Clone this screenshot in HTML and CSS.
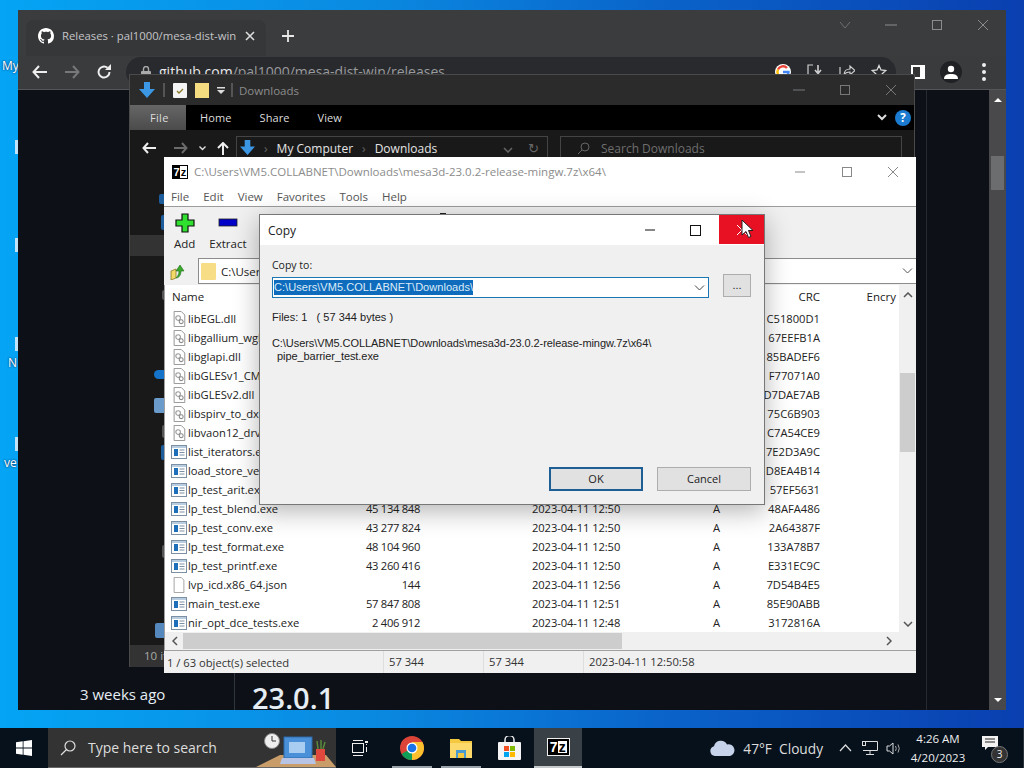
FILE: index.html
```html
<!DOCTYPE html>
<html lang="en">
<head>
  <meta charset="UTF-8">
  <title>Copy - 7-Zip</title>
  <link rel="stylesheet" href="styles.css">
</head>
<body>
  <svg class="defs" width="0" height="0">
    <symbol id="ico-dll" viewBox="0 0 16 18">
      <path d="M2.5.5h8l4 4v13h-12z" fill="#fff" stroke="#8a8a8a"/>
      <circle cx="7" cy="8" r="2.6" fill="none" stroke="#9a9a9a" stroke-width="1.2"/>
      <circle cx="10.5" cy="12" r="2.2" fill="none" stroke="#8a8a8a" stroke-width="1.2"/>
    </symbol>
    <symbol id="ico-exe" viewBox="0 0 16 14">
      <rect x=".5" y=".5" width="15" height="13" fill="#fff" stroke="#7d8fa3"/>
      <rect x="1" y="1" width="14" height="2" fill="#b9cde0"/>
      <rect x="3" y="4" width="4" height="7" fill="#1c6fb8"/>
      <path d="M8.5 5h5M8.5 7.5h5M8.5 10h5" stroke="#7d8fa3"/>
    </symbol>
    <symbol id="ico-file" viewBox="0 0 16 18">
      <path d="M2.5.5h8l3 3v14h-11z" fill="#fff" stroke="#9a9a9a"/>
    </symbol>
    <symbol id="ico-down" viewBox="0 0 16 16">
      <path d="M5 0h6v7h5l-8 9-8-9h5z" fill="#3b97e3"/>
    </symbol>
  </svg>

  <!-- bits of desktop icons that stick out left of the browser -->
  <span class="desk-label desk-my">My</span>
  <span class="desk-label desk-n">N</span>
  <span class="desk-label desk-ve">ve</span>
  <i class="desk-bit bit-1"></i>
  <i class="desk-bit bit-2"></i>
  <i class="desk-bit bit-3"></i>
  <i class="desk-bit bit-4"></i>

  <div class="chrome">
    <div class="tabstrip">
      <div class="tab">
        <svg width="16" height="16" viewBox="0 0 16 16"><path fill="#fff" d="M8 0C3.58 0 0 3.58 0 8c0 3.54 2.29 6.53 5.47 7.59.4.07.55-.17.55-.38 0-.19-.01-.82-.01-1.49-2.01.37-2.53-.49-2.69-.94-.09-.23-.48-.94-.82-1.13-.28-.15-.68-.52-.01-.53.63-.01 1.08.58 1.23.82.72 1.21 1.87.87 2.33.66.07-.52.28-.87.51-1.07-1.78-.2-3.64-.89-3.64-3.95 0-.87.31-1.59.82-2.15-.08-.2-.36-1.02.08-2.12 0 0 .67-.21 2.2.82.64-.18 1.32-.27 2-.27.68 0 1.36.09 2 .27 1.53-1.04 2.2-.82 2.2-.82.44 1.1.16 1.92.08 2.12.51.56.82 1.27.82 2.15 0 3.07-1.87 3.75-3.65 3.95.29.25.54.73.54 1.48 0 1.07-.01 1.93-.01 2.2 0 .21.15.46.55.38A8.013 8.013 0 0016 8c0-4.42-3.58-8-8-8z"/></svg>
        <span class="tab-title">Releases · pal1000/mesa-dist-win</span>
        <svg width="10" height="10" viewBox="0 0 10 10"><path d="M1 1l8 8M9 1l-8 8" stroke="#ddd" stroke-width="1.6"/></svg>
      </div>
      <svg class="newtab" width="14" height="14" viewBox="0 0 14 14"><path d="M7 1v12M1 7h12" stroke="#e8e8e8" stroke-width="1.8"/></svg>
      <div class="win-btns dim">
        <svg width="12" height="12" viewBox="0 0 12 12"><path d="M1 3l5 6 5-6" fill="none" stroke="#6f7072"/></svg>
        <svg width="12" height="12" viewBox="0 0 12 12"><path d="M0 6h12" stroke="#8b8c8e"/></svg>
        <svg width="12" height="12" viewBox="0 0 12 12"><rect x="1.5" y="1.5" width="9" height="9" fill="none" stroke="#8b8c8e"/></svg>
        <svg width="12" height="12" viewBox="0 0 12 12"><path d="M1 1l10 10M11 1L1 11" stroke="#8b8c8e"/></svg>
      </div>
    </div>
    <div class="toolbar">
      <svg width="16" height="14" viewBox="0 0 16 14"><path d="M7 1L1.500 7 7 13M2 7h13" fill="none" stroke="#eee" stroke-width="2"/></svg>
      <svg class="gap-nav" width="16" height="14" viewBox="0 0 16 14"><path d="M9 1l5.500 6L9 13M14 7H1" fill="none" stroke="#77787a" stroke-width="2"/></svg>
      <svg class="gap-nav" width="16" height="16" viewBox="0 0 16 16"><path d="M13.500 8A5.500 5.500 0 1 1 11.500 3.800" fill="none" stroke="#eee" stroke-width="2"/><path d="M9 6h6V0z" fill="#eee"/></svg>
      <div class="omnibox">
        <svg width="10" height="12" viewBox="0 0 10 12"><rect y="5" width="10" height="7" rx="1" fill="#aaa"/><path d="M2.500 5V3a2.500 2.500 0 0 1 5 0v2" fill="none" stroke="#aaa" stroke-width="1.400"/></svg>
        <span class="url"><b>github.com</b>/pal1000/mesa-dist-win/releases</span>
        <svg class="omni-first" width="16" height="16" viewBox="0 0 16 16">
          <circle cx="8" cy="8" r="8" fill="#fff"/>
          <path d="M3 5.500A5.500 5.500 0 0 1 12 4" fill="none" stroke="#ea4335" stroke-width="2.400"/>
          <path d="M3 5.500a5.500 5.500 0 0 0 0 5" fill="none" stroke="#fbbc05" stroke-width="2.400"/>
          <path d="M3 10.500A5.500 5.500 0 0 0 12 12" fill="none" stroke="#34a853" stroke-width="2.400"/>
          <path d="M8 8h5.500A5.500 5.500 0 0 1 12 12" fill="none" stroke="#4285f4" stroke-width="2.400"/>
        </svg>
        <svg class="omni-ico" width="16" height="16" viewBox="0 0 16 16"><path d="M6 1H1v14h14v-4" fill="none" stroke="#d0d0d0" stroke-width="1.200"/><path d="M11 1v7M8 6l3 3.500L14 6" fill="none" stroke="#d0d0d0" stroke-width="1.600"/></svg>
        <svg class="omni-ico" width="16" height="16" viewBox="0 0 16 16"><path d="M1 3v12h11" fill="none" stroke="#d0d0d0" stroke-width="1.200"/><path d="M5 11c0-4 3-6 6-6V2l5 4.500-5 4.500V8c-3 0-5 1-6 3z" fill="none" stroke="#d0d0d0" stroke-width="1.200"/></svg>
        <svg class="omni-ico" width="16" height="16" viewBox="0 0 16 16"><path d="M8 1.500l2 4.500 4.800.5-3.600 3.200 1 4.800L8 12.200 3.800 14.500l1-4.800L1.200 6.500 6 6z" fill="none" stroke="#d8d8d8" stroke-width="1.300"/></svg>
      </div>
      <svg class="panel" width="14" height="14" viewBox="0 0 14 14"><rect width="14" height="14" fill="#fff"/><rect x="2" y="2" width="7" height="10" fill="#333"/></svg>
      <span class="avatar"><svg width="14" height="14" viewBox="0 0 14 14"><circle cx="7" cy="4" r="3.200" fill="#fff"/><path d="M0 14c0-4 3-5 7-5s7 1 7 5z" fill="#fff"/></svg></span>
      <span class="dots"><i></i><i></i><i></i></span>
    </div>
    <div class="page">
      <div class="page-main">
        <i class="page-line"></i>
        <div class="page-foot">
          <span class="ago">3 weeks ago</span>
          <span class="rule"></span>
          <span class="version">23.0.1</span>
        </div>
      </div>
      <div class="page-scroll">
        <span class="tri-up"></span>
        <span class="page-thumb"></span>
        <span class="tri-down"></span>
      </div>
    </div>
  </div>

  <div class="explorer">
    <div class="ex-title">
      <svg width="16" height="16"><use href="#ico-down"/></svg>
      <span class="sep"></span>
      <svg width="14" height="15" viewBox="0 0 14 15"><rect width="14" height="15" rx="1" fill="#f4f4f4"/><path d="M4 8l2 2 4-4" fill="none" stroke="#8a7a2a" stroke-width="1.300"/></svg>
      <svg width="14" height="15" viewBox="0 0 14 15"><rect width="14" height="15" fill="#f6dc80"/></svg>
      <svg class="qa-more" width="8" height="7" viewBox="0 0 8 7"><path d="M0 0h8v1.400H0zM0 3h8L4 7z" fill="#ddd"/></svg>
      <span class="sep"></span>
      <span class="ex-name">Downloads</span>
      <div class="win-btns ex-btns">
        <svg width="12" height="12" viewBox="0 0 12 12"><path d="M0 6h12" stroke="#77787a"/></svg>
        <svg width="12" height="12" viewBox="0 0 12 12"><rect x="1.500" y="1.500" width="9" height="9" fill="none" stroke="#77787a"/></svg>
        <svg width="12" height="12" viewBox="0 0 12 12"><path d="M1 1l10 10M11 1L1 11" stroke="#77787a"/></svg>
      </div>
    </div>
    <div class="ex-ribbon">
      <span class="rb-tab rb-file">File</span>
      <span class="rb-tab">Home</span>
      <span class="rb-tab">Share</span>
      <span class="rb-tab">View</span>
      <svg class="rb-chev" width="10" height="7" viewBox="0 0 10 7"><path d="M1 1l4 4 4-4" fill="none" stroke="#ddd" stroke-width="2"/></svg>
      <span class="help">?</span>
    </div>
    <div class="ex-nav">
      <svg width="14" height="12" viewBox="0 0 14 12"><path d="M6 1L1.500 6 6 11M2 6h12" fill="none" stroke="#eee" stroke-width="2"/></svg>
      <svg class="nv-fwd" width="14" height="12" viewBox="0 0 14 12"><path d="M8 1l4.500 5L8 11M12 6H0" fill="none" stroke="#6b6b6b" stroke-width="2"/></svg>
      <svg class="nv-dd" width="7" height="5" viewBox="0 0 7 5"><path d="M.5.5l3 3 3-3" fill="none" stroke="#ddd" stroke-width="1.400"/></svg>
      <svg class="nv-up" width="12" height="13" viewBox="0 0 12 13"><path d="M1 6l5-5 5 5M6 1v12" fill="none" stroke="#eee" stroke-width="2"/></svg>
      <div class="ex-path">
        <svg width="15" height="15"><use href="#ico-down"/></svg>
        <span class="crumb-sep">›</span>
        <span>My Computer</span>
        <span class="crumb-sep">›</span>
        <span>Downloads</span>
        <svg class="path-chev" width="10" height="6" viewBox="0 0 10 6"><path d="M1 1l4 4 4-4" fill="none" stroke="#666" stroke-width="1.500"/></svg>
        <span class="path-refresh">↻</span>
      </div>
      <div class="ex-search">
        <svg width="13" height="13" viewBox="0 0 13 13"><circle cx="8" cy="5" r="4" fill="none" stroke="#666"/><path d="M5 8l-4 4" stroke="#666"/></svg>
        <span>Search Downloads</span>
      </div>
    </div>
    <div class="ex-body">
      <i class="side-selected"></i>
      <i class="side-bit s1"></i>
      <i class="side-bit s2"></i>
      <i class="side-bit s3"></i>
      <i class="side-bit s4"></i>
      <i class="side-bit s5"></i>
      <i class="side-bit s6"></i>
      <i class="side-bit g1"></i>
      <i class="side-bit g2"></i>
      <i class="side-bit g3"></i>
    </div>
    <div class="ex-status">10 items</div>
  </div>

  <div class="sevenzip">
    <div class="sz-title">
      <span class="logo7z"><b>7</b><em>z</em></span>
      <span class="sz-path">C:\Users\VM5.COLLABNET\Downloads\mesa3d-23.0.2-release-mingw.7z\x64\</span>
      <div class="win-btns sz-btns">
        <svg width="12" height="12" viewBox="0 0 12 12"><path d="M0 6h10" stroke="#888"/></svg>
        <svg width="12" height="12" viewBox="0 0 12 12"><rect x="1.500" y="1.500" width="9" height="9" fill="none" stroke="#888"/></svg>
        <svg width="12" height="12" viewBox="0 0 12 12"><path d="M1 1l10 10M11 1L1 11" stroke="#888"/></svg>
      </div>
    </div>
    <div class="sz-menu">
      <span>File</span><span>Edit</span><span>View</span><span>Favorites</span><span>Tools</span><span>Help</span>
    </div>
    <div class="sz-tools">
      <div class="tool">
        <svg width="20" height="20" viewBox="0 0 20 20"><path d="M7 1h6v6h6v6h-6v6H7v-6H1V7h6z" fill="#2fe02f" stroke="#111" stroke-width="1.200"/></svg>
        <span>Add</span>
      </div>
      <div class="tool">
        <svg width="20" height="20" viewBox="0 0 20 20"><rect x="1" y="6" width="18" height="7" fill="#0000c8" stroke="#222" stroke-width=".8"/></svg>
        <span>Extract</span>
      </div>
      <i class="tool-top"></i>
    </div>
    <div class="sz-addr">
      <svg width="16" height="17" viewBox="0 0 16 17"><path d="M1 8l5-2v9l-5 2z" fill="#f3d968" stroke="#8a7a2a" stroke-width=".8"/><path d="M6 15c3 0 5-3 5-7h3L10 2 6 8h3c0 3-1 5-3 7z" fill="#3aa82a" stroke="#1f6f18" stroke-width=".6"/></svg>
      <div class="addr-box">
        <svg width="15" height="17" viewBox="0 0 15 17"><rect width="15" height="17" rx="1" fill="#f7dd85"/></svg>
        <span>C:\Users\VM5.COLLABNET\Downloads\mesa3d-23.0.2-release-mingw.7z\x64\</span>
        <svg class="addr-chev" width="11" height="6" viewBox="0 0 11 6"><path d="M1 .5l4.500 4.500L10 .5" fill="none" stroke="#555"/></svg>
      </div>
    </div>
    <div class="sz-list">
      <div class="list-main">
        <div class="row head"><span class="c-name">Name</span><span class="c-crc">CRC</span><span class="c-enc">Encry</span></div>
        <div class="row"><svg class="ic"><use href="#ico-dll"/></svg><span class="c-name">libEGL.dll</span><span class="c-crc">C51800D1</span></div>
        <div class="row"><svg class="ic"><use href="#ico-dll"/></svg><span class="c-name">libgallium_wgl.dll</span><span class="c-crc">67EEFB1A</span></div>
        <div class="row"><svg class="ic"><use href="#ico-dll"/></svg><span class="c-name">libglapi.dll</span><span class="c-crc">85BADEF6</span></div>
        <div class="row"><svg class="ic"><use href="#ico-dll"/></svg><span class="c-name">libGLESv1_CM.dll</span><span class="c-crc">F77071A0</span></div>
        <div class="row"><svg class="ic"><use href="#ico-dll"/></svg><span class="c-name">libGLESv2.dll</span><span class="c-crc">D7DAE7AB</span></div>
        <div class="row"><svg class="ic"><use href="#ico-dll"/></svg><span class="c-name">libspirv_to_dxil.dll</span><span class="c-crc">75C6B903</span></div>
        <div class="row"><svg class="ic"><use href="#ico-dll"/></svg><span class="c-name">libvaon12_drv_video.dll</span><span class="c-crc">C7A54CE9</span></div>
        <div class="row"><svg class="ic"><use href="#ico-exe"/></svg><span class="c-name">list_iterators.exe</span><span class="c-crc">7E2D3A9C</span></div>
        <div class="row"><svg class="ic"><use href="#ico-exe"/></svg><span class="c-name">load_store_vec.exe</span><span class="c-crc">D8EA4B14</span></div>
        <div class="row"><svg class="ic"><use href="#ico-exe"/></svg><span class="c-name">lp_test_arit.exe</span><span class="c-crc">57EF5631</span></div>
        <div class="row"><svg class="ic"><use href="#ico-exe"/></svg><span class="c-name">lp_test_blend.exe</span><span class="c-size">45 134 848</span><span class="c-date">2023-04-11 12:50</span><span class="c-attr">A</span><span class="c-crc">48AFA486</span></div>
        <div class="row"><svg class="ic"><use href="#ico-exe"/></svg><span class="c-name">lp_test_conv.exe</span><span class="c-size">43 277 824</span><span class="c-date">2023-04-11 12:50</span><span class="c-attr">A</span><span class="c-crc">2A64387F</span></div>
        <div class="row"><svg class="ic"><use href="#ico-exe"/></svg><span class="c-name">lp_test_format.exe</span><span class="c-size">48 104 960</span><span class="c-date">2023-04-11 12:50</span><span class="c-attr">A</span><span class="c-crc">133A78B7</span></div>
        <div class="row"><svg class="ic"><use href="#ico-exe"/></svg><span class="c-name">lp_test_printf.exe</span><span class="c-size">43 260 416</span><span class="c-date">2023-04-11 12:50</span><span class="c-attr">A</span><span class="c-crc">E331EC9C</span></div>
        <div class="row"><svg class="ic"><use href="#ico-file"/></svg><span class="c-name">lvp_icd.x86_64.json</span><span class="c-size">144</span><span class="c-date">2023-04-11 12:56</span><span class="c-attr">A</span><span class="c-crc">7D54B4E5</span></div>
        <div class="row"><svg class="ic"><use href="#ico-exe"/></svg><span class="c-name">main_test.exe</span><span class="c-size">57 847 808</span><span class="c-date">2023-04-11 12:51</span><span class="c-attr">A</span><span class="c-crc">85E90ABB</span></div>
        <div class="row"><svg class="ic"><use href="#ico-exe"/></svg><span class="c-name">nir_opt_dce_tests.exe</span><span class="c-size">2 406 912</span><span class="c-date">2023-04-11 12:48</span><span class="c-attr">A</span><span class="c-crc">3172816A</span></div>
      </div>
      <div class="vscroll">
        <svg width="10" height="6" viewBox="0 0 10 6"><path d="M1 5l4-4 4 4" fill="none" stroke="#555" stroke-width="1.500"/></svg>
        <span class="vthumb"></span>
        <svg class="v-down" width="10" height="6" viewBox="0 0 10 6"><path d="M1 1l4 4 4-4" fill="none" stroke="#555" stroke-width="1.500"/></svg>
      </div>
    </div>
    <div class="hscroll">
      <svg width="6" height="10" viewBox="0 0 6 10"><path d="M5 1L1 5l4 4" fill="none" stroke="#555" stroke-width="1.500"/></svg>
      <span class="hthumb"></span>
      <svg class="h-right" width="6" height="10" viewBox="0 0 6 10"><path d="M1 1l4 4-4 4" fill="none" stroke="#555" stroke-width="1.500"/></svg>
    </div>
    <div class="sz-status">
      <span class="st-sel">1 / 63 object(s) selected</span>
      <span class="st-size">57 344</span>
      <span class="st-size">57 344</span>
      <span class="st-date">2023-04-11 12:50:58</span>
    </div>
  </div>

  <div class="dialog">
    <div class="dlg-title">
      <span class="dlg-name">Copy</span>
      <svg class="dlg-min" width="12" height="12" viewBox="0 0 12 12"><path d="M1 6h10" stroke="#111"/></svg>
      <svg class="dlg-max" width="11" height="11" viewBox="0 0 11 11"><rect x=".5" y=".5" width="10" height="10" fill="none" stroke="#111"/></svg>
      <span class="dlg-close"><svg width="12" height="12" viewBox="0 0 12 12"><path d="M1 1l10 10M11 1L1 11" stroke="#fff"/></svg></span>
    </div>
    <div class="dlg-body">
      <div class="dlg-label">Copy to:</div>
      <div class="dlg-combo-row">
        <div class="dlg-combo">
          <span class="dlg-sel">C:\Users\VM5.COLLABNET\Downloads\</span>
          <svg width="11" height="6" viewBox="0 0 11 6"><path d="M1 .5l4.500 4.500L10 .5" fill="none" stroke="#444"/></svg>
        </div>
        <span class="dlg-dots">...</span>
      </div>
      <div class="dlg-files">Files: 1 &nbsp; ( 57 344 bytes )</div>
      <div class="dlg-src">C:\Users\VM5.COLLABNET\Downloads\mesa3d-23.0.2-release-mingw.7z\x64\</div>
      <div class="dlg-src dlg-src2">pipe_barrier_test.exe</div>
      <div class="dlg-actions">
        <span class="btn btn-ok">OK</span>
        <span class="btn">Cancel</span>
      </div>
    </div>
  </div>

  <svg class="cursor" width="13" height="20" viewBox="0 0 13 20"><path d="M1 1v15l4-3.500 2.500 6 2.500-1-2.500-6H12z" fill="#fff" stroke="#222"/></svg>

  <div class="taskbar">
    <svg class="start" width="16" height="16" viewBox="0 0 16 16"><path d="M0 2.300l6.700-1v6.300H0zM7.500 1.200L16 0v7.600H7.500zM0 8.400h6.700v6.300l-6.700-1zM7.500 8.400H16V16l-8.500-1.200z" fill="#fff"/></svg>
    <div class="search">
      <svg width="16" height="16" viewBox="0 0 16 16"><circle cx="10" cy="6" r="5" fill="none" stroke="#ddd" stroke-width="1.200"/><path d="M6.500 9.500L1 15" stroke="#ddd" stroke-width="1.200"/></svg>
      <span>Type here to search</span>
      <svg class="search-art" width="80" height="36" viewBox="0 0 80 36">
        <path d="M12 30L24 24H70L80 36H0z" fill="#c99d6a"/>
        <circle cx="16" cy="10" r="7.500" fill="#eee" stroke="#888"/>
        <path d="M16 5v5h4" fill="none" stroke="#333"/>
        <rect x="28" y="6" width="28" height="21" fill="#4a90d9" stroke="#2d6aa8"/>
        <rect x="33" y="11" width="16" height="11" fill="#a9cdf0"/>
        <path d="M26 27h32l2 6H24z" fill="#b7c4e6"/>
        <rect x="60" y="18" width="9" height="12" fill="#e0483e"/>
        <path d="M62 18l-1-8M65 18v-9M67 18l2-7" stroke="#5a8a3a" stroke-width="1.500"/>
      </svg>
    </div>
    <svg class="taskview" width="16" height="16" viewBox="0 0 16 16"><path d="M1 .5h10M1 15.500h10M14.500 4v1M14.500 7v5" stroke="#eee"/><rect x=".5" y="3.500" width="11" height="9" fill="none" stroke="#eee"/><rect x="13" y="1" width="3" height="2" fill="#eee"/></svg>
    <span class="tb-app tb-on">
      <svg width="24" height="24" viewBox="0 0 24 24">
        <circle cx="12" cy="12" r="12" fill="#db4437"/>
        <path d="M12 12L1.600 18A12 12 0 0 0 12 24l6-12z" fill="#0f9d58"/>
        <path d="M12 24A12 12 0 0 0 24 12a12 12 0 0 0-1.600-6H12z" fill="#fbc02d"/>
        <circle cx="12" cy="12" r="5.500" fill="#fff"/>
        <circle cx="12" cy="12" r="4.300" fill="#1a73e8"/>
      </svg>
    </span>
    <span class="tb-app tb-on">
      <svg width="22" height="20" viewBox="0 0 22 20"><path d="M0 1h9l2 2h11v17H0z" fill="#f4c93f"/><rect y="5" width="22" height="15" fill="#fbd96b"/><rect x="6" y="12" width="10" height="8" fill="#4a9bd1"/><rect x="8" y="15" width="6" height="5" fill="#f4c93f"/></svg>
    </span>
    <span class="tb-app">
      <svg width="23" height="24" viewBox="0 0 23 24"><path d="M7 6V4a4 4 0 0 1 9 0v2" fill="none" stroke="#eee" stroke-width="1.500"/><rect y="6" width="23" height="18" rx="1" fill="#f5f5f5"/><rect x="6" y="10" width="5" height="5" fill="#f25022"/><rect x="12" y="10" width="5" height="5" fill="#7fba00"/><rect x="6" y="16" width="5" height="5" fill="#00a4ef"/><rect x="12" y="16" width="5" height="5" fill="#ffb900"/></svg>
    </span>
    <span class="tb-app tb-active"><span class="logo7z logo-big"><b>7</b><em>z</em></span></span>
    <div class="tray">
      <svg class="cloud" width="25" height="16" viewBox="0 0 25 16"><path d="M5 16a5 5 0 0 1-1-9.800A7 7 0 0 1 17 4.500 5.800 5.800 0 0 1 20 16z" fill="#c6d3ea"/></svg>
      <span class="weather">47°F&nbsp; Cloudy</span>
      <svg class="caret" width="13" height="8" viewBox="0 0 13 8"><path d="M1 7l5.500-6L12 7" fill="none" stroke="#ddd" stroke-width="1.200"/></svg>
      <svg class="net" width="16" height="14" viewBox="0 0 16 14"><path d="M3 .5h12.500v9H1" fill="none" stroke="#ddd"/><rect x=".5" y=".5" width="3" height="4" fill="none" stroke="#ddd"/><path d="M8 9.500v3.500M4 13.500h8" stroke="#ddd"/></svg>
      <svg class="vol" width="15" height="13" viewBox="0 0 15 13"><path d="M1 4h2.500L7 1v11L3.500 9H1z" fill="none" stroke="#ddd"/><path d="M9.500 4q1.500 2.500 0 5M12 2.500q2.500 4 0 8" fill="none" stroke="#aaa"/></svg>
      <div class="clock"><span>4:26 AM</span><span>4/20/2023</span></div>
      <span class="notify">
        <svg width="16" height="14" viewBox="0 0 16 14"><path d="M0 0h16v11H6l-3 3v-3H0z" fill="#f2f2f2"/><path d="M3 3h10M3 6h10" stroke="#222"/></svg>
        <span class="badge">3</span>
      </span>
    </div>
  </div>
</body>
</html>
```

FILE: styles.css
```css
* {
  box-sizing: border-box;
}

html, body {
  height: 100%;
}

body {
  margin: 0;
  width: 1024px;
  height: 768px;
  position: relative;
  overflow: hidden;
  font-family: "Open Sans", "Noto Sans", sans-serif;
  font-size: 11.5px;
  background: linear-gradient(90deg, #05a4f4 0%, #0a8be2 35%, #0a63c9 65%, #0a3fb0 100%);
}

.defs {
  position: absolute;
}

svg {
  display: block;
  flex: none;
}

/* desktop */
.desk-label {
  position: absolute;
  color: #fff;
  font-size: 12px;
  line-height: 14px;
  text-shadow: 0 0 2px #003;
}

.desk-my { left: 2px; top: 59px; }
.desk-n { left: 8px; top: 356px; }
.desk-ve { left: 4px; top: 456px; }

.desk-bit {
  position: absolute;
  left: 15px;
  width: 3px;
  height: 14px;
  background: #bfe4fa;
}

.bit-1 { top: 140px; }
.bit-2 { top: 238px; }
.bit-3 { top: 337px; }
.bit-4 { top: 437px; }

/* browser */
.chrome {
  position: absolute;
  left: 18px;
  top: 10px;
  width: 988px;
  height: 700px;
  display: flex;
  flex-direction: column;
  background: #3b3c3e;
}

.tabstrip {
  height: 46px;
  flex: none;
  display: flex;
  align-items: flex-end;
  padding-left: 8px;
}

.tab {
  width: 240px;
  height: 36px;
  display: flex;
  align-items: center;
  gap: 8px;
  padding: 0 11px 5px 12px;
  background: #363739;
  border-radius: 8px 8px 0 0;
  color: #c4c5c7;
  font-size: 11.3px;
}

.tab-title {
  flex: 1;
  white-space: nowrap;
  overflow: hidden;
}

.newtab {
  margin: 0 0 13px 15px;
}

.win-btns {
  margin-left: auto;
  display: flex;
  gap: 34px;
  align-self: flex-start;
}

.dim {
  padding: 9px 17px 0 0;
}

.toolbar {
  height: 34px;
  flex: none;
  display: flex;
  align-items: center;
  padding: 0 0 2px 14px;
  background: #3a3b3d;
  border-bottom: 1px solid #55565a;
}

.gap-nav {
  margin-left: 16px;
}

.omnibox {
  margin-left: 14px;
  width: 770px;
  height: 30px;
  display: flex;
  align-items: center;
  gap: 8px;
  padding: 0 9px 0 15px;
  background: #292a2d;
  border-radius: 15px;
}

.url {
  font-size: 14px;
  color: #9a9b9d;
}

.url b {
  font-weight: 400;
  color: #e8e8e8;
}

.omni-first {
  margin-left: auto;
}

.omni-ico {
  margin-left: 8px;
}

.panel {
  margin-left: 15px;
}

.avatar {
  margin-left: 15px;
  width: 22px;
  height: 22px;
  border-radius: 50%;
  background: #202124;
  display: flex;
  align-items: center;
  justify-content: center;
}

.dots {
  margin-left: 20px;
  display: flex;
  flex-direction: column;
  gap: 3px;
}

.dots i {
  width: 4px;
  height: 4px;
  border-radius: 50%;
  background: #eee;
}

.page {
  flex: 1;
  display: flex;
  min-height: 0;
  background: #0d1117;
}

.page-main {
  flex: 1;
  display: flex;
  align-items: flex-end;
  overflow: hidden;
  position: relative;
}

.page-line {
  position: absolute;
  left: 908px;
  top: 0;
  bottom: 0;
  width: 1px;
  background: #262b32;
}

.page-foot {
  display: flex;
  height: 37px;
  padding-left: 62px;
  color: #e6edf3;
}

.ago {
  width: 154px;
  font-size: 15px;
  line-height: 42px;
}

.rule {
  width: 1px;
  background: #30363d;
}

.version {
  margin-left: 17px;
  font-size: 29px;
  font-weight: 600;
  line-height: 50px;
  height: 37px;
  overflow: hidden;
}

.page-scroll {
  width: 17px;
  display: flex;
  flex-direction: column;
  align-items: center;
  padding: 8px 0;
  background: #49494b;
}

.tri-up, .tri-down {
  width: 0;
  height: 0;
  border-left: 4px solid transparent;
  border-right: 4px solid transparent;
}

.tri-up {
  border-bottom: 4px solid #fff;
}

.tri-down {
  margin-top: auto;
  border-top: 4px solid #fff;
}

.page-thumb {
  margin-top: 54px;
  width: 13px;
  height: 34px;
  background: #6c6d6f;
}

/* explorer */
.explorer {
  position: absolute;
  left: 129px;
  top: 74px;
  width: 786px;
  height: 593px;
  display: flex;
  flex-direction: column;
  background: #191919;
  border: 1px solid #4a4a4a;
  border-bottom: 0;
  color: #ddd;
}

.ex-title {
  height: 30px;
  flex: none;
  display: flex;
  align-items: center;
  gap: 8px;
  padding-left: 9px;
  background: #2b2b2b;
}

.sep {
  width: 2px;
  height: 14px;
  background: #555;
}

.qa-more {
  margin: 0 -2px 0 0;
}

.ex-name {
  margin-left: -2px;
  color: #8c8c8c;
}

.ex-btns {
  align-self: center;
  padding-right: 17px;
}

.ex-ribbon {
  height: 25px;
  flex: none;
  display: flex;
  align-items: center;
  background: #000;
  letter-spacing: .1px;
}

.rb-tab {
  padding: 0 14px;
  line-height: 25px;
  font-size: 11px;
}

.rb-file {
  width: 56px;
  padding: 0 0 0 20px;
  letter-spacing: .3px;
  background: linear-gradient(#666, #4b4b4b);
}

.rb-chev {
  margin: 0 8px 0 auto;
}

.help {
  width: 16px;
  height: 16px;
  margin-right: 3px;
  border-radius: 50%;
  background: #1b7bd0;
  color: #fff;
  font-weight: 700;
  text-align: center;
  line-height: 16px;
}

.ex-nav {
  height: 28px;
  flex: none;
  display: flex;
  align-items: flex-start;
  padding: 6px 0 0 12px;
  font-size: 12px;
}

.ex-nav > svg {
  margin-top: 6px;
}

.nv-fwd { margin-left: 18px; }
.nv-dd { margin-left: 11px; margin-top: 10px !important; }
.nv-up { margin-left: 11px; }

.ex-path {
  margin-left: 7px;
  width: 312px;
  height: 40px;
  display: flex;
  align-items: flex-start;
  gap: 9px;
  padding: 3px 8px 0 3px;
  border: 1px solid #444;
  color: #e4e4e4;
  line-height: 18px;
}

.crumb-sep {
  color: #666;
}

.path-chev {
  margin: 7px 0 0 auto;
}

.path-refresh {
  font-family: "DejaVu Sans", sans-serif;
  font-size: 13px;
  color: #666;
  margin-left: 6px;
}

.ex-search {
  margin-left: 12px;
  width: 342px;
  height: 40px;
  display: flex;
  align-items: flex-start;
  gap: 11px;
  padding: 3px 0 0 16px;
  border: 1px solid #444;
  color: #6e6e6e;
  line-height: 18px;
}

.ex-search svg {
  margin-top: 2px;
}

.ex-body {
  flex: 1;
  position: relative;
}

.side-selected {
  position: absolute;
  left: 0;
  top: 77px;
  width: 36px;
  height: 21px;
  background: #333;
}

.side-bit {
  position: absolute;
  left: 29px;
  width: 6px;
  height: 10px;
  background: #1d5d9c;
  border-radius: 2px 0 0 2px;
}

.s1 { top: 36px; }
.s2 { top: 57px; height: 15px; width: 4px; left: 31px; }
.s3 { top: 212px; left: 24px; width: 11px; height: 9px; background: #1573c9; border-radius: 5px 0 0 5px; }
.s4 { top: 240px; left: 24px; width: 11px; height: 15px; background: #6a9bca; }
.s5 { top: 287px; left: 31px; width: 4px; height: 15px; }
.s6 { top: 465px; left: 25px; width: 10px; height: 15px; background: #5589bd; }
.g1 { top: 132px; left: 32px; width: 3px; height: 10px; background: #555; }
.g2 { top: 267px; left: 32px; width: 3px; height: 13px; background: #555; }
.g3 { top: 387px; left: 32px; width: 3px; height: 13px; background: #555; }

.ex-status {
  height: 22px;
  flex: none;
  padding-left: 14px;
  background: #333;
  color: #aaa;
  line-height: 21px;
}

/* 7-zip file manager */
.sevenzip {
  position: absolute;
  left: 164px;
  top: 157px;
  width: 752px;
  height: 516px;
  display: flex;
  flex-direction: column;
  background: #f0f0f0;
  color: #222;
}

.sz-title {
  height: 29px;
  flex: none;
  display: flex;
  align-items: center;
  gap: 6px;
  padding-left: 8px;
  background: #fff;
}

.logo7z {
  display: inline-flex;
  width: 16px;
  height: 14px;
  padding: 1px;
  background: #000;
  font: 700 11px/12px "Liberation Sans", sans-serif;
}

.logo7z b {
  flex: 1;
  color: #fff;
  text-align: center;
}

.logo7z em {
  flex: 1;
  font-style: normal;
  background: #fff;
  color: #000;
  text-align: center;
}

.sz-path {
  color: #8c8c8c;
}

.sz-btns {
  align-self: center;
  padding-right: 17px;
}

.sz-menu {
  height: 21px;
  flex: none;
  display: flex;
  gap: 14px;
  padding-left: 7px;
  background: #fff;
  color: #555;
  line-height: 21px;
  border-bottom: 1px solid #9c9c9c;
}

.sz-tools {
  height: 50px;
  flex: none;
  display: flex;
  padding: 6px 0 0 10px;
  gap: 14px;
}

.tool {
  display: flex;
  flex-direction: column;
  align-items: center;
  gap: 3px;
  line-height: 15px;
}

.tool-top {
  margin: 0 0 0 179px;
  width: 6px;
  height: 4px;
  background: #222;
}

.sz-addr {
  height: 28px;
  flex: none;
  display: flex;
  align-items: center;
  gap: 12px;
  padding-left: 6px;
}

.addr-box {
  flex: 1;
  height: 26px;
  display: flex;
  align-items: center;
  gap: 5px;
  padding: 0 3px 0 2px;
  background: #fff;
  border: 1px solid #8c8c8c;
  border-right: 0;
}

.addr-chev {
  margin-left: auto;
}

.sz-list {
  flex: 1;
  min-height: 0;
  display: flex;
  background: #fff;
  border-left: 1px solid #a0a0a0;
  overflow: hidden;
}

.list-main {
  flex: 1;
  min-width: 0;
  overflow: hidden;
  font-size: 11.2px;
}

.row {
  height: 19px;
  display: flex;
  align-items: center;
  padding-left: 6px;
  white-space: nowrap;
  position: relative;
  line-height: 19px;
}

.row.head {
  height: 24px;
  padding: 0 0 2px 7px;
  font-size: 11.5px;
}

.ic {
  width: 16px;
  height: 16px;
  margin-right: 1px;
}

.c-name {
  width: 150px;
}

.c-size, .c-date, .c-attr, .c-crc, .c-enc {
  position: absolute;
}

.c-size {
  right: 479px;
  letter-spacing: -.3px;
}

.c-date {
  left: 367px;
  letter-spacing: -.1px;
}

.c-attr {
  left: 548px;
}

.c-crc {
  right: 79px;
}

.c-enc {
  right: 3px;
}

.vscroll {
  width: 17px;
  flex: none;
  display: flex;
  flex-direction: column;
  align-items: center;
  padding: 7px 0 5px;
  background: #f0f0f0;
}

.vthumb {
  width: 15px;
  height: 79px;
  margin-top: 75px;
  background: #cdcdcd;
}

.v-down {
  margin-top: auto;
}

.hscroll {
  height: 18px;
  flex: none;
  display: flex;
  align-items: center;
  padding: 0 24px 0 7px;
  background: #f0f0f0;
  border-left: 1px solid #a0a0a0;
}

.hthumb {
  width: 439px;
  height: 16px;
  margin-left: 5px;
  background: #cdcdcd;
}

.h-right {
  margin-left: auto;
}

.sz-status {
  height: 23px;
  flex: none;
  display: flex;
  align-items: center;
  border-top: 1px solid #a0a0a0;
  color: #333;
  font-size: 11.2px;
}

.st-sel {
  width: 219px;
  padding-left: 3px;
}

.st-size {
  width: 100px;
  padding-left: 5px;
  border-left: 1px solid #ddd;
  line-height: 22px;
}

.st-date {
  padding-left: 5px;
  border-left: 1px solid #ddd;
  line-height: 22px;
}

/* copy dialog */
.dialog {
  position: absolute;
  left: 259px;
  top: 214px;
  width: 506px;
  height: 291px;
  display: flex;
  flex-direction: column;
  background: #f0f0f0;
  border: 1px solid #777;
  box-shadow: 0 6px 24px rgba(0, 0, 0, .3);
  color: #222;
  font-family: "Liberation Sans", sans-serif;
  font-size: 11px;
}

.dlg-title {
  height: 30px;
  flex: none;
  display: flex;
  align-items: center;
  padding-left: 8px;
  background: #fff;
  font-family: "Open Sans", sans-serif;
  font-size: 12px;
}

.dlg-name {
  flex: 1;
}

.dlg-min {
  margin-right: 34px;
}

.dlg-max {
  margin-right: 18px;
}

.dlg-close {
  width: 45px;
  height: 29px;
  display: flex;
  align-items: center;
  justify-content: center;
  background: #e81123;
  align-self: flex-start;
}

.dlg-body {
  flex: 1;
  display: flex;
  flex-direction: column;
  padding: 13px 13px 13px 12px;
}

.dlg-label {
  line-height: 14px;
  font-family: "Open Sans", sans-serif;
  font-size: 10.5px;
}

.dlg-combo-row {
  margin-top: 5px;
  display: flex;
  align-items: flex-start;
  gap: 14px;
}

.dlg-combo {
  flex: 1;
  height: 21px;
  display: flex;
  align-items: center;
  justify-content: space-between;
  padding: 0 3px 0 1px;
  background: #fff;
  border: 1px solid #1c76b4;
}

.dlg-sel {
  background: #0f6cbd;
  color: #dcebf7;
  line-height: 15px;
  letter-spacing: .05px;
}

.dlg-dots {
  width: 28px;
  height: 23px;
  margin-top: -3px;
  background: #e1e1e1;
  border: 1px solid #adadad;
  text-align: center;
  line-height: 21px;
}

.dlg-files {
  margin-top: 12px;
  line-height: 14px;
}

.dlg-src {
  margin-top: 13px;
  line-height: 13px;
  letter-spacing: -.07px;
}

.dlg-src2 {
  margin-top: 0;
  padding-left: 5px;
}

.dlg-actions {
  margin-top: auto;
  display: flex;
  justify-content: flex-end;
  gap: 14px;
}

.btn {
  width: 94px;
  height: 24px;
  background: #e1e1e1;
  border: 1px solid #adadad;
  text-align: center;
  line-height: 22px;
  font-family: "Open Sans", sans-serif;
  font-size: 11px;
}

.btn-ok {
  border: 2px solid #1d5f94;
  line-height: 20px;
}

.cursor {
  position: absolute;
  left: 741px;
  top: 219px;
}

/* taskbar */
.taskbar {
  position: absolute;
  left: 0;
  right: 0;
  bottom: 0;
  height: 40px;
  display: flex;
  align-items: center;
  background: #07111c;
  color: #eee;
}

.start {
  margin-left: 16px;
}

.search {
  margin-left: 16px;
  width: 288px;
  height: 40px;
  display: flex;
  align-items: center;
  gap: 12px;
  padding-left: 12px;
  background: #333;
  border-bottom: 1px solid #666;
  font-size: 14px;
  color: #ddd;
  position: relative;
  overflow: hidden;
}

.search-art {
  position: absolute;
  right: 0;
  bottom: 0;
}

.taskview {
  margin-left: 16px;
}

.tb-app {
  width: 49px;
  height: 40px;
  display: flex;
  align-items: center;
  justify-content: center;
  position: relative;
}

.taskview + .tb-app {
  margin-left: 19px;
}

.tb-on::after {
  content: "";
  position: absolute;
  left: 5px;
  right: 4px;
  bottom: 0;
  height: 2px;
  background: #9aa3aa;
}

.tb-active {
  width: 48px;
  background: #3a4146;
  border-bottom: 2px solid #c5c9cc;
}

.logo-big {
  width: 23px;
  height: 18px;
  padding: 2px;
  border: 1px solid #eee;
  font-size: 14px;
  line-height: 13px;
}

.tray {
  margin-left: auto;
  display: flex;
  align-items: center;
  height: 40px;
  padding-right: 4px;
  border-right: 1px solid #2a323a;
  font-size: 14px;
}

.weather {
  margin-left: 8px;
  color: #ddd;
  font-size: 13.7px;
}

.caret {
  margin-left: 16px;
}

.net {
  margin-left: 10px;
}

.vol {
  margin-left: 8px;
}

.clock {
  margin-left: 11px;
  width: 52px;
  display: flex;
  flex-direction: column;
  align-items: center;
  font-size: 11.5px;
  line-height: 19px;
  white-space: nowrap;
}

.notify {
  margin-left: 18px;
  margin-right: 15px;
  position: relative;
  width: 22px;
  height: 24px;
}

.badge {
  position: absolute;
  right: -4px;
  bottom: -3px;
  width: 17px;
  height: 17px;
  border-radius: 50%;
  background: #333;
  border: 1px solid #777;
  font-size: 10px;
  line-height: 15px;
  text-align: center;
}
```
